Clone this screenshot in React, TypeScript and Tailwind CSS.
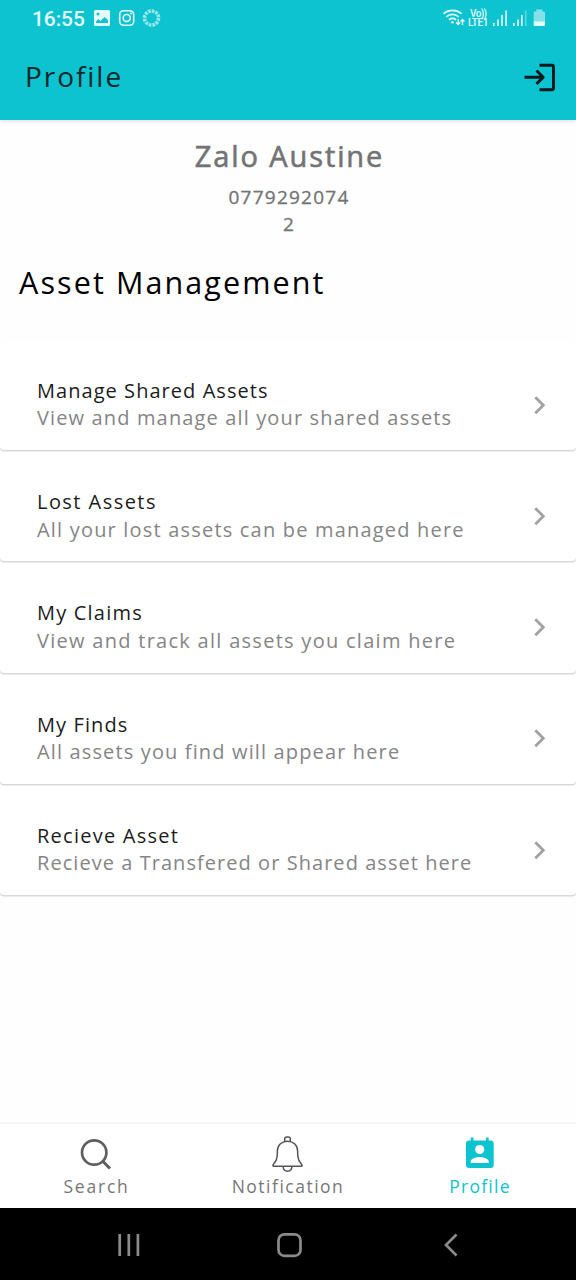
import React from "react";

type Asset = { title: string; note: string; titleTrack: string; noteTrack: string };

const items: Asset[] = [
  { title: "Manage Shared Assets", note: "View and manage all your shared assets", titleTrack: "tracking-[1.050px]", noteTrack: "tracking-[1.140px]" },
  { title: "Lost Assets", note: "All your lost assets can be managed here", titleTrack: "tracking-[1.450px]", noteTrack: "tracking-[1.190px]" },
  { title: "My Claims", note: "View and track all assets you claim here", titleTrack: "tracking-[1.200px]", noteTrack: "tracking-[1.280px]" },
  { title: "My Finds", note: "All assets you find will appear here", titleTrack: "tracking-[1.100px]", noteTrack: "tracking-[1.140px]" },
  { title: "Recieve Asset", note: "Recieve a Transfered or Shared asset here", titleTrack: "tracking-[1.250px]", noteTrack: "tracking-[1.050px]" },
];

function StatusBar() {
  return (
    <div className="flex h-9 items-center pl-8 pr-[30px] text-[#e4fbfc]">
      <span className="w-[61px] whitespace-nowrap pt-[1px] font-['Roboto',sans-serif] text-[21px] font-medium leading-9 tracking-[-0.100px]">16:55</span>
      <svg className="h-9 w-[70px]" viewBox="93 0 70 36" fill="none">
        <path fill="currentColor" fillRule="evenodd" d="M95.500 10h13a1.500 1.500 0 0 1 1.500 1.500v13a1.500 1.500 0 0 1-1.500 1.500h-13a1.500 1.500 0 0 1-1.500-1.500v-13a1.500 1.500 0 0 1 1.500-1.500ZM96 23h12v-3l-3.500-3-4 4-2-2L96 21.500ZM98 12.500a1.500 1.500 0 1 0 0 3a1.500 1.500 0 1 0 0-3Z" />
        <rect x="119.700" y="10.700" width="14" height="14.600" rx="4" stroke="currentColor" strokeWidth="1.600" />
        <circle cx="126.700" cy="18" r="3.500" stroke="currentColor" strokeWidth="1.600" />
        <circle cx="131" cy="13.500" r="1" fill="currentColor" />
        <circle cx="151.500" cy="18" r="7" stroke="currentColor" strokeOpacity="0.65" strokeWidth="3.600" strokeDasharray="2.700 0.960" />
      </svg>
      <span className="flex-1" />
      <svg className="h-9 w-[26px]" viewBox="442 0 26 36" fill="none" stroke="currentColor">
        <path d="M443.500 13.700c5.300-4.300 12.700-4.300 18 0M446.200 16.800c3.900-3 8.700-3 12.600 0M449 19.700c2.300-1.700 4.700-1.700 7 0" strokeWidth="1.700" />
        <circle cx="452.500" cy="22.200" r="1.300" fill="currentColor" stroke="none" />
        <path d="M458.200 19v5.200M456.200 22.600l2 2 2-2M462.500 25v-5.200M460.500 21.400l2-2 2 2" strokeWidth="1.400" />
      </svg>
      <div className="flex h-[18px] w-[22px] flex-col whitespace-nowrap font-['Roboto',sans-serif] text-[10px] font-medium leading-[9px]">
        <span className="pl-[2px] tracking-[-0.600px]">Vo))</span>
        <span className="tracking-[-0.400px]">LTE1</span>
      </div>
      <svg className="h-9 w-14" viewBox="490 0 56 36" fill="currentColor">
        <path d="M493 23h1.600v3H493zM497.200 19.500h1.600V26h-1.600zM501.200 15h1.600v11h-1.600zM505.300 10.500h1.600V26h-1.600zM513 23h1.600v3H513zM517.200 19.500h1.600V26h-1.600zM521 15h1.600v11H521z" />
        <path d="M525 10.500h1.500V26H525z" opacity="0.4" />
        <path d="M536.300 9.500h6v2h1.700q1 0 1 1V22h-11.300v-9.500q0-1 1-1h1.600Z" opacity="0.55" />
        <path d="M533.700 21.500H545V25q0 1-1 1h-9.300q-1 0-1-1Z" />
      </svg>
    </div>
  );
}

function Header() {
  return (
    <header className="relative z-10 h-[120px] bg-[#0dc3d0] shadow-[0_1px_4px_rgba(0,0,0,0.14)]">
      <StatusBar />
      <div className="flex h-[82px] items-center justify-between pl-[25px] pr-[20px] text-[#0a2629]">
        <h1 className="pb-[2px] text-[28px] font-normal leading-9 tracking-[1.950px]">Profile</h1>
        <svg className="h-8 w-8" viewBox="0 0 32 32" fill="none" stroke="#06191b" strokeWidth="2.900" strokeLinejoin="round">
          <path d="M.5 16.200h18.500M12.500 9.500l6.700 6.700-6.700 6.700" />
          <path d="M15.500 4.200H28a1.500 1.500 0 0 1 1.500 1.500v21.500a1.500 1.500 0 0 1-1.500 1.500H15.500" />
        </svg>
      </div>
    </header>
  );
}

function AssetRow({ item }: { item: Asset }) {
  return (
    <div className="mb-[2px] flex h-[109.200px] items-end rounded-[4px] bg-white pb-[18.400px] pl-[37px] pr-[24px] shadow-[0_1.500px_0_#d8d8d8]">
      <div className="flex flex-1 flex-col whitespace-nowrap text-[20px] leading-[27.400px]">
        <span className={"text-[#1c1c1c] " + item.titleTrack}>{item.title}</span>
        <span className={"text-[#858585] " + item.noteTrack}>{item.note}</span>
      </div>
      <svg className="mb-[15px] h-6 w-6" viewBox="0 0 24 24" fill="none" stroke="#a2a2a2" strokeWidth="2.800">
        <path d="M7.300 4.200l8 8-8 8" />
      </svg>
    </div>
  );
}

function BottomNav() {
  return (
    <nav className="grid h-[86px] grid-cols-3 border-t-2 border-[#f6f6f6] bg-white text-[17.500px] leading-6 text-[#777777]">
      <div className="flex flex-col items-center pt-[10px]">
        <svg className="h-10 w-10" viewBox="0 0 40 40" fill="none" stroke="#5e5e5e" strokeWidth="2.700">
          <circle cx="18.200" cy="18.500" r="12.200" />
          <path d="M26.500 27l7.500 7.500" strokeWidth="3" />
        </svg>
        <span className="pl-[1px] tracking-[1.800px]">Search</span>
      </div>
      <div className="flex flex-col items-center pt-[10px]">
        <svg className="h-10 w-10" viewBox="0 0 40 40" fill="none" stroke="#555555" strokeWidth="1.500" strokeLinejoin="round">
          <path d="M16.700 8V5a2 2 0 0 1 2-2h1.600a2 2 0 0 1 2 2v3M5.600 32.300c-.7 0-.9-1-.4-1.600 2-2.300 3.700-4.600 4-8.500l.2-5.400C9.600 10.900 14 7.200 19.500 7.200s9.900 3.700 10.100 9.600l.2 5.400c.3 3.900 2 6.200 4 8.500.5.600.3 1.600-.4 1.600ZM15 32.300c.5 6.500 8.500 6.500 9 0" />
        </svg>
        <span className="tracking-[1.500px]">Notification</span>
      </div>
      <div className="flex flex-col items-center pt-[10px] text-[#0dc3d0]">
        <svg className="h-10 w-10" viewBox="0 0 40 40">
          <path fill="currentColor" d="M10.700 3.500h2.800v3h12.400v-3h2.800v3h2a3 3 0 0 1 3 3V31a3 3 0 0 1-3 3H9a3 3 0 0 1-3-3V9.500a3 3 0 0 1 3-3h1.700Z" />
          <circle cx="19.700" cy="15.500" r="4.600" fill="white" />
          <path fill="white" d="M10.700 29v-1.400c0-3.100 6-4.600 9-4.600s9 1.500 9 4.600V29Z" />
        </svg>
        <span className="tracking-[1.270px]">Profile</span>
      </div>
    </nav>
  );
}

function SystemNav() {
  return (
    <div className="flex h-[72px] items-center justify-between bg-black pl-[113px] pr-[110px]">
      <svg className="h-8 w-8" viewBox="0 0 32 32" fill="none" stroke="#8b8b8b" strokeWidth="2.700">
        <path d="M6.700 6v22M15.800 6v22M24.900 6v22" />
      </svg>
      <svg className="h-8 w-8" viewBox="0 0 32 32" fill="none" stroke="#8b8b8b" strokeWidth="2.700">
        <rect x="4.500" y="6.300" width="22" height="21.600" rx="6" />
      </svg>
      <svg className="h-8 w-8" viewBox="0 0 32 32" fill="none" stroke="#8b8b8b" strokeWidth="2.700">
        <path d="M22.500 6.500L12 17l10.500 10.500" />
      </svg>
    </div>
  );
}

export default function App() {
  return (
    <div className="flex h-[1280px] w-[576px] flex-col overflow-hidden bg-[#fefefe] font-['Open_Sans',sans-serif]">
      <Header />
      <main className="flex-1">
        <section className="flex flex-col items-center pt-[16px] text-[#737373]">
          <h2 className="pl-[3px] text-[29px] font-medium leading-10 tracking-[1.900px] [-webkit-text-stroke:0.600px_#737373]">Zalo Austine</h2>
          <span className="mt-[8px] pl-[2px] text-[19px] font-medium leading-[27px] tracking-[1.250px] [-webkit-text-stroke:0.300px_#737373]">0779292074</span>
          <span className="pl-[1px] text-[19px] font-medium leading-[27px] [-webkit-text-stroke:0.300px_#737373]">2</span>
        </section>
        <h2 className="mt-[24px] whitespace-nowrap pl-[19px] text-[30.500px] leading-10 tracking-[2.100px] text-black">Asset Management</h2>
        <section className="mt-[39px]">
          {items.map((item) => (
            <AssetRow key={item.title} item={item} />
          ))}
        </section>
      </main>
      <BottomNav />
      <SystemNav />
    </div>
  );
}
